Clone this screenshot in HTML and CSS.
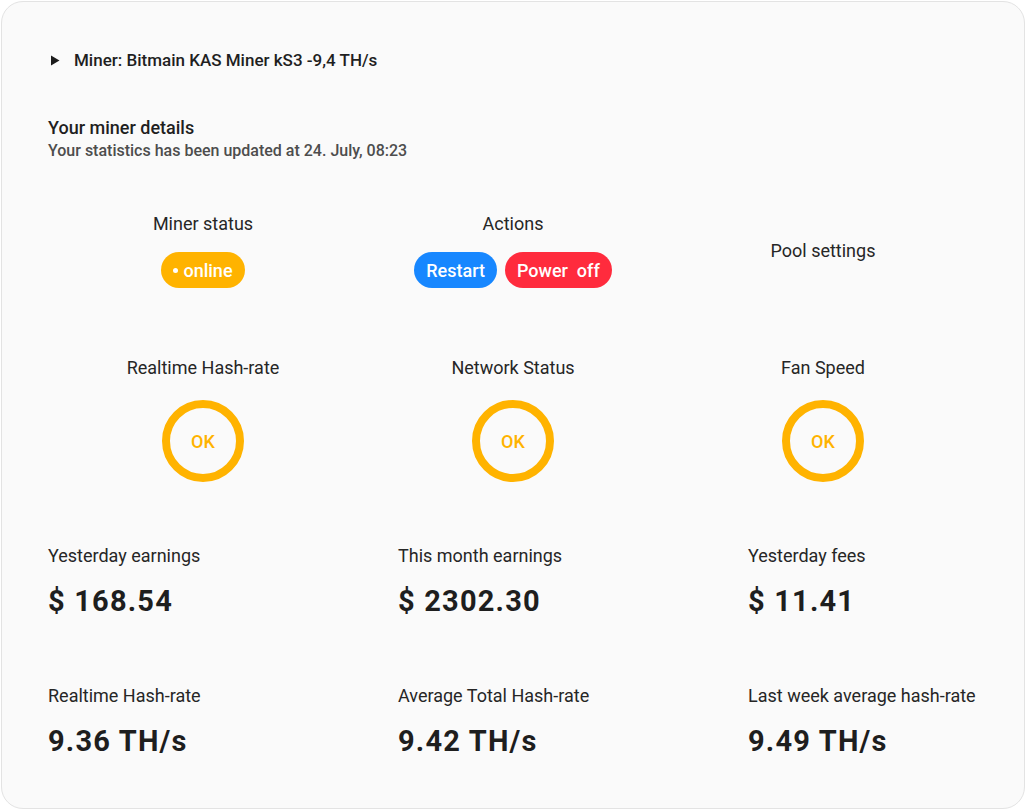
FILE: index.html
```html
<!DOCTYPE html>
<html lang="en">
<head>
<meta charset="utf-8">
<title>Miner details</title>
<link rel="stylesheet" href="styles.css">
</head>
<body>
<div class="card">
  <div class="summary">
    <svg class="marker" width="10" height="11" viewBox="0 0 10 11"><path d="M1 0.5 L9.5 5.5 L1 10.5 Z" fill="#1c1c1c"/></svg>
    <span>Miner: Bitmain KAS Miner kS3 -9,4 TH/s</span>
  </div>

  <div class="heading">Your miner details</div>
  <div class="sub">Your statistics has been updated at 24. July, 08:23</div>

  <div class="cols top">
    <div class="col">
      <div class="col-title">Miner status</div>
      <div class="pills"><span class="pill pill-online"><span class="dot"></span>online</span></div>
    </div>
    <div class="col">
      <div class="col-title">Actions</div>
      <div class="pills">
        <span class="pill pill-blue">Restart</span>
        <span class="pill pill-red">Power&nbsp; off</span>
      </div>
    </div>
    <div class="col col-center">
      <div class="col-title">Pool settings</div>
    </div>
  </div>

  <div class="cols rings">
    <div class="col">
      <div class="col-title">Realtime Hash-rate</div>
      <div class="ring">OK</div>
    </div>
    <div class="col">
      <div class="col-title">Network Status</div>
      <div class="ring">OK</div>
    </div>
    <div class="col">
      <div class="col-title">Fan Speed</div>
      <div class="ring">OK</div>
    </div>
  </div>

  <div class="stats first">
    <div class="stat"><div class="label">Yesterday earnings</div><div class="value">$ 168.54</div></div>
    <div class="stat"><div class="label">This month earnings</div><div class="value">$ 2302.30</div></div>
    <div class="stat"><div class="label">Yesterday fees</div><div class="value">$ 11.41</div></div>
  </div>
  <div class="stats second">
    <div class="stat"><div class="label">Realtime Hash-rate</div><div class="value">9.36 TH/s</div></div>
    <div class="stat"><div class="label">Average Total Hash-rate</div><div class="value">9.42 TH/s</div></div>
    <div class="stat"><div class="label">Last week average hash-rate</div><div class="value">9.49 TH/s</div></div>
  </div>
</div>
</body>
</html>
```

FILE: styles.css
```css
* { box-sizing: border-box; }
html, body { margin: 0; padding: 0; background: #ffffff; }
body {
  font-family: Roboto, "Liberation Sans", Arial, sans-serif;
  color: #222222;
  width: 1026px;
  height: 810px;
  overflow: hidden;
}
.card {
  margin: 1px 0 0 1px;
  width: 1024px;
  height: 808px;
  border: 1px solid #e3e3e3;
  border-radius: 22px;
  background: #fafafa;
  padding: 47px 0 0 46px;
}
.summary {
  display: flex;
  align-items: center;
  height: 22px;
  font-size: 17px;
  font-weight: 500;
  line-height: 22px;
  color: #1f1f1f;
}
.marker { margin-left: 2px; margin-right: 14px; }
.heading {
  margin-top: 46px;
  font-size: 18px;
  font-weight: 500;
  line-height: 22px;
  color: #1f1f1f;
}
.sub {
  margin-top: 2px;
  font-size: 16px;
  font-weight: 500;
  line-height: 20px;
  color: #4d4d4d;
}
.cols {
  display: grid;
  grid-template-columns: 310px 310px 310px;
}
.cols.top { margin-top: 52px; }
.cols.rings { margin-top: 69px; }
.col {
  display: flex;
  flex-direction: column;
  align-items: center;
}
.col-center { justify-content: center; }
.col-title {
  font-size: 18px;
  line-height: 22px;
  color: #262626;
}
.pills {
  display: flex;
  gap: 8px;
  margin-top: 17px;
}
.pill {
  display: inline-flex;
  align-items: center;
  height: 36px;
  padding: 0 12px;
  border-radius: 18px;
  color: #ffffff;
  font-size: 18px;
  font-weight: 500;
}
.pill-online { background: #ffb300; padding: 0 12px 0 12px; }
.dot {
  width: 5px;
  height: 5px;
  border-radius: 50%;
  background: #ffffff;
  margin-right: 5px;
}
.pill-blue { background: #1787ff; }
.pill-red { background: #ff2b3d; }
.ring {
  margin-top: 21px;
  width: 82px;
  height: 82px;
  border: 8.5px solid #ffb300;
  border-radius: 50%;
  display: flex;
  align-items: center;
  justify-content: center;
  color: #ffb300;
  font-size: 18px;
  font-weight: 500;
}
.stats {
  display: grid;
  grid-template-columns: 350px 350px 280px;
}
.stats.first { margin-top: 63px; }
.stats.second { margin-top: 67px; }
.label {
  font-size: 18px;
  line-height: 22px;
  color: #262626;
}
.value {
  margin-top: 17px;
  font-size: 29px;
  font-weight: 700;
  line-height: 34px;
  letter-spacing: 1.2px;
  color: #1e1e1e;
}
```
